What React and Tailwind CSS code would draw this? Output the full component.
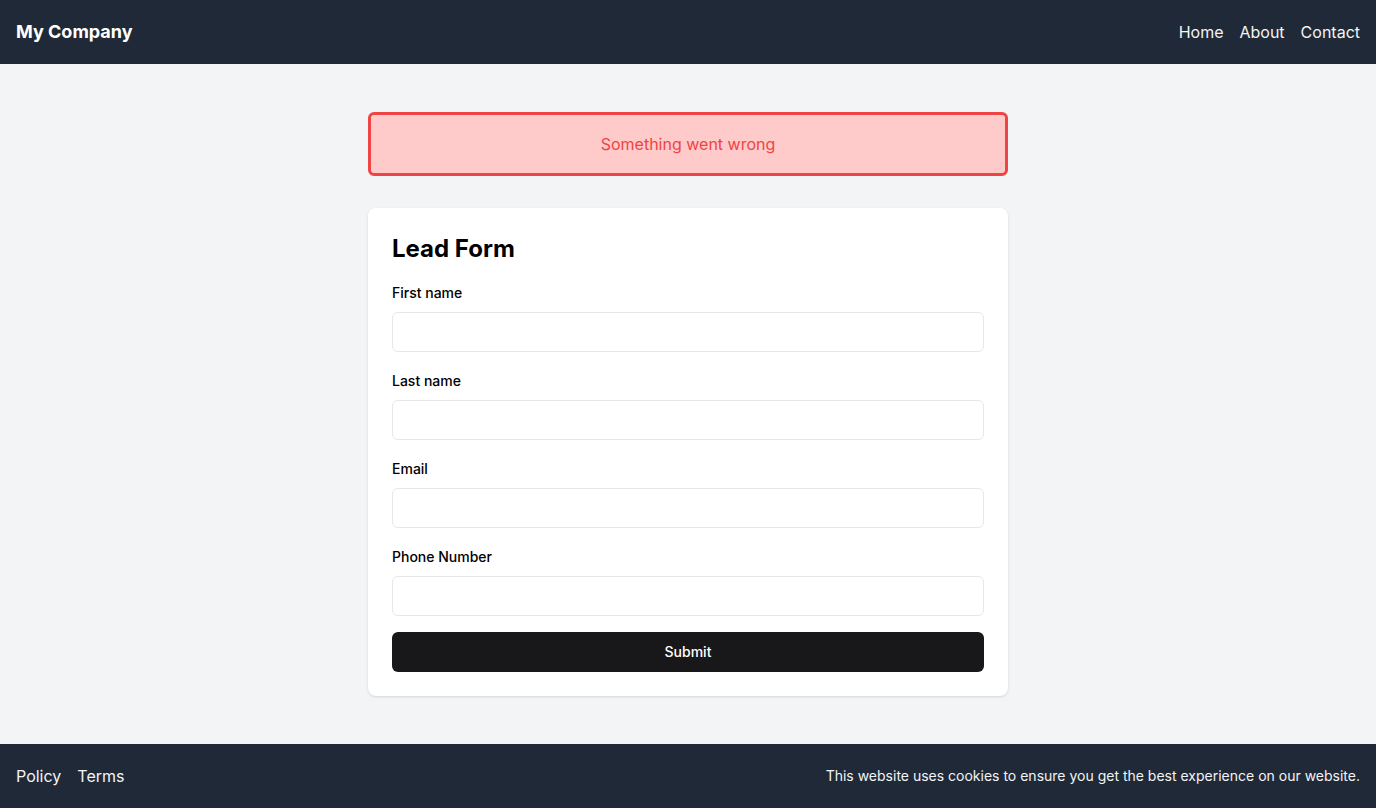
export default function App() {
  const fields = ["First name", "Last name", "Email", "Phone Number"];
  return (
    <div className="min-h-screen flex flex-col bg-[#f3f4f6]" style={{ fontFamily: "Inter, 'Noto Sans', sans-serif" }}>
      <header className="h-16 bg-[#1f2937] flex items-center justify-between px-4 text-white">
        <div className="text-lg font-bold">My Company</div>
        <nav className="flex gap-4 text-base text-[#f3f4f6]">
          <a>Home</a>
          <a>About</a>
          <a>Contact</a>
        </nav>
      </header>
      <main className="flex-1 flex flex-col items-center pt-12 pb-12">
        <div className="w-[640px] flex flex-col gap-8">
          <div className="h-16 rounded-md border-[3px] border-[#ef4444] bg-[#fecaca] flex items-center justify-center text-[#ef4444] text-base">
            Something went wrong
          </div>
          <div className="bg-white rounded-lg shadow-sm p-6 flex flex-col">
            <h1 className="text-2xl font-bold text-black pt-px mb-[17px]">Lead Form</h1>
            <div className="flex flex-col gap-[18px]">
              {fields.map((f) => (
                <div key={f} className="flex flex-col gap-[9px]">
                  <label className="text-sm font-medium text-black pt-px">{f}</label>
                  <input className="h-10 rounded-md border border-[#e5e7eb] bg-white px-3 outline-none" />
                </div>
              ))}
            </div>
            <button className="mt-4 h-10 rounded-md bg-[#18181b] text-white text-sm font-medium">
              Submit
            </button>
          </div>
        </div>
      </main>
      <footer className="h-16 bg-[#1f2937] flex items-center justify-between px-4 text-[#f3f4f6]">
        <div className="flex gap-4 text-base">
          <a>Policy</a>
          <a>Terms</a>
        </div>
        <div className="text-sm">This website uses cookies to ensure you get the best experience on our website.</div>
      </footer>
    </div>
  );
}
